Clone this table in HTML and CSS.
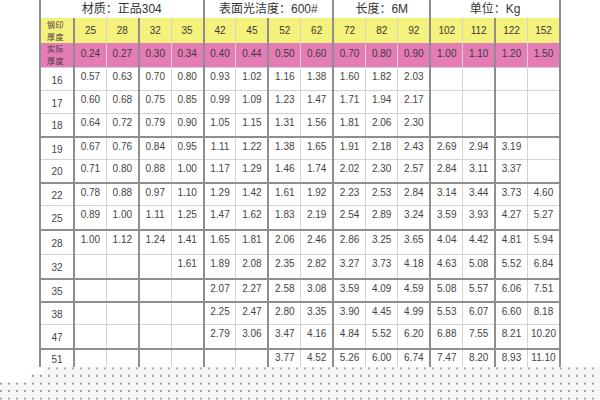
FILE: index.html
```html
<!DOCTYPE html>
<html lang="zh">
<head>
<meta charset="utf-8">
<title>不锈钢管重量表</title>
<link rel="stylesheet" href="styles.css">
</head>
<body>
<div class="page">
<table class="grid">
<colgroup><col class="c-label"><col span="15"></colgroup>
<tr class="title">
<th colspan="5" class="t1">材质：正品304</th>
<th colspan="4" class="t2">表面光洁度：600#</th>
<th colspan="3" class="t3">长度：6M</th>
<th colspan="4" class="t4">单位：Kg</th>
</tr>
<tr class="head">
<th class="lab"><span>钢印</span><span>厚度</span></th><th>25</th><th>28</th><th>32</th><th>35</th><th>42</th><th>45</th><th>52</th><th>62</th><th>72</th><th>82</th><th>92</th><th>102</th><th>112</th><th>122</th><th>152</th>
</tr>
<tr class="real">
<th class="lab"><span>实际</span><span>厚度</span></th><td>0.24</td><td>0.27</td><td>0.30</td><td>0.34</td><td>0.40</td><td>0.44</td><td>0.50</td><td>0.60</td><td>0.70</td><td>0.80</td><td>0.90</td><td>1.00</td><td>1.10</td><td>1.20</td><td>1.50</td>
</tr>
<tr class="row"><th>16</th><td>0.57</td><td>0.63</td><td>0.70</td><td>0.80</td><td>0.93</td><td>1.02</td><td>1.16</td><td>1.38</td><td>1.60</td><td>1.82</td><td>2.03</td><td></td><td></td><td></td><td></td></tr>
<tr class="row"><th>17</th><td>0.60</td><td>0.68</td><td>0.75</td><td>0.85</td><td>0.99</td><td>1.09</td><td>1.23</td><td>1.47</td><td>1.71</td><td>1.94</td><td>2.17</td><td></td><td></td><td></td><td></td></tr>
<tr class="row tb"><th>18</th><td>0.64</td><td>0.72</td><td>0.79</td><td>0.90</td><td>1.05</td><td>1.15</td><td>1.31</td><td>1.56</td><td>1.81</td><td>2.06</td><td>2.30</td><td></td><td></td><td></td><td></td></tr>
<tr class="row"><th>19</th><td>0.67</td><td>0.76</td><td>0.84</td><td>0.95</td><td>1.11</td><td>1.22</td><td>1.38</td><td>1.65</td><td>1.91</td><td>2.18</td><td>2.43</td><td>2.69</td><td>2.94</td><td>3.19</td><td></td></tr>
<tr class="row tb"><th>20</th><td>0.71</td><td>0.80</td><td>0.88</td><td>1.00</td><td>1.17</td><td>1.29</td><td>1.46</td><td>1.74</td><td>2.02</td><td>2.30</td><td>2.57</td><td>2.84</td><td>3.11</td><td>3.37</td><td></td></tr>
<tr class="row"><th>22</th><td>0.78</td><td>0.88</td><td>0.97</td><td>1.10</td><td>1.29</td><td>1.42</td><td>1.61</td><td>1.92</td><td>2.23</td><td>2.53</td><td>2.84</td><td>3.14</td><td>3.44</td><td>3.73</td><td>4.60</td></tr>
<tr class="row tb h24"><th>25</th><td>0.89</td><td>1.00</td><td>1.11</td><td>1.25</td><td>1.47</td><td>1.62</td><td>1.83</td><td>2.19</td><td>2.54</td><td>2.89</td><td>3.24</td><td>3.59</td><td>3.93</td><td>4.27</td><td>5.27</td></tr>
<tr class="row h25"><th>28</th><td>1.00</td><td>1.12</td><td>1.24</td><td>1.41</td><td>1.65</td><td>1.81</td><td>2.06</td><td>2.46</td><td>2.86</td><td>3.25</td><td>3.65</td><td>4.04</td><td>4.42</td><td>4.81</td><td>5.94</td></tr>
<tr class="row tb h24"><th>32</th><td></td><td></td><td></td><td>1.61</td><td>1.89</td><td>2.08</td><td>2.35</td><td>2.82</td><td>3.27</td><td>3.73</td><td>4.18</td><td>4.63</td><td>5.08</td><td>5.52</td><td>6.84</td></tr>
<tr class="row tb"><th>35</th><td></td><td></td><td></td><td></td><td>2.07</td><td>2.27</td><td>2.58</td><td>3.08</td><td>3.59</td><td>4.09</td><td>4.59</td><td>5.08</td><td>5.57</td><td>6.06</td><td>7.51</td></tr>
<tr class="row"><th>38</th><td></td><td></td><td></td><td></td><td>2.25</td><td>2.47</td><td>2.80</td><td>3.35</td><td>3.90</td><td>4.45</td><td>4.99</td><td>5.53</td><td>6.07</td><td>6.60</td><td>8.18</td></tr>
<tr class="row tb h24"><th>47</th><td></td><td></td><td></td><td></td><td>2.79</td><td>3.06</td><td>3.47</td><td>4.16</td><td>4.84</td><td>5.52</td><td>6.20</td><td>6.88</td><td>7.55</td><td>8.21</td><td>10.20</td></tr>
<tr class="row last"><th>51</th><td></td><td></td><td></td><td></td><td></td><td></td><td>3.77</td><td>4.52</td><td>5.26</td><td>6.00</td><td>6.74</td><td>7.47</td><td>8.20</td><td>8.93</td><td>11.10</td></tr>
</table>
<div class="dots">
<div class="d1"></div>
<div class="d2"></div>
<div class="d3"></div>
</div>
</div>
</body>
</html>
```

FILE: styles.css
```css
html, body {
  margin: 0;
  padding: 0;
  background: #ffffff;
}

.page {
  width: 600px;
  height: 400px;
  overflow: hidden;
}

.grid {
  border-collapse: collapse;
  table-layout: fixed;
  width: 522px;
  margin-left: 39px;
  font-family: "Liberation Sans", Arial, sans-serif;
  font-size: 10px;
  line-height: 12px;
  color: #444444;
}

.c-label {
  width: 34px;
}

.grid th,
.grid td {
  padding: 0;
  text-align: center;
  font-weight: normal;
  border: 1px solid #d3d3d3;
  overflow: hidden;
  white-space: nowrap;
}

/* group separators */
.grid tr:not(.title) > :nth-child(1),
.grid tr:not(.title) > :nth-child(3),
.grid tr:not(.title) > :nth-child(5),
.grid tr:not(.title) > :nth-child(7),
.grid tr:not(.title) > :nth-child(9),
.grid tr:not(.title) > :nth-child(12),
.grid tr:not(.title) > :nth-child(14),
.grid tr:not(.title) > :nth-child(16) {
  border-right: 2px solid #8e8e8e;
}

.grid tr > :first-child {
  border-left: 2px solid #8e8e8e;
}

.title {
  height: 18px;
}

.title th {
  border-top: none;
  border-bottom: none;
  border-right: 2px solid #8e8e8e;
  font-family: "Liberation Sans", "Noto Sans CJK SC", sans-serif;
  font-size: 12px;
  line-height: 14px;
  color: #333333;
  vertical-align: middle;
}

.head {
  height: 25px;
}

.head th {
  background: #f4f17c;
  border-top: none;
  border-bottom: none;
  color: #3a3a3a;
  vertical-align: middle;
}

.real {
  height: 24px;
}

.real th,
.real td {
  background: #e57cb6;
  border-top: none;
  color: #3a3a3a;
  vertical-align: middle;
  padding-bottom: 2px;
}

.grid .lab {
  font-family: "Noto Sans CJK SC", sans-serif;
  font-size: 8px;
  letter-spacing: 0.5px;
  text-align: left;
  padding: 0 0 0 6px;
  color: #4a3a44;
  vertical-align: middle;
}

.lab span {
  display: block;
  height: 12px;
  line-height: 12px;
}

.row {
  height: 23px;
}

.row.h24 {
  height: 24px;
}

.row.h25 {
  height: 25px;
}

.row.last {
  height: 18px;
}

.row td {
  vertical-align: top;
  padding-top: 3px;
}

.row th {
  vertical-align: middle;
  padding-top: 3px;
}

.row.last td {
  padding-top: 2px;
}

.row.last th {
  padding-top: 3px;
}

.row.tb th,
.row.tb td {
  border-bottom: 2px solid #8e8e8e;
}

.row.last th,
.row.last td {
  border-bottom: none;
}

.dots > div {
  background-color: #f6f6f6;
  background-image: radial-gradient(circle, #a0a0a0 0.8px, rgba(160, 160, 160, 0) 1.4px);
  background-size: 8px 7.5px;
}

.dots .d1 {
  height: 7.5px;
  margin-left: 44px;
  background-position: 1px -2.2px;
}

.dots .d2 {
  height: 7.5px;
  margin-left: 30px;
  background-position: -1px -2.2px;
}

.dots .d3 {
  height: 30px;
  background-position: -3px -2.2px;
}
```
